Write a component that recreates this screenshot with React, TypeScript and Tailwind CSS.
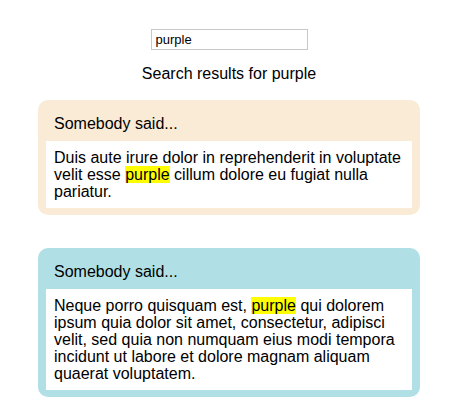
import React from "react";

function Highlight({ text, term }: { text: string; term: string }) {
  const parts = text.split(term);
  return (
    <>
      {parts.map((p, i) => (
        <React.Fragment key={i}>
          {p}
          {i < parts.length - 1 && <mark className="bg-[#ffff00] text-black">{term}</mark>}
        </React.Fragment>
      ))}
    </>
  );
}

function Card({ bg, text }: { bg: string; text: string }) {
  return (
    <div className={`${bg} rounded-[10px] px-2 pt-[15px] pb-[7px]`}>
      <div className="leading-[17px] px-2 mb-[9px]">Somebody said...</div>
      <div className="bg-white px-2 py-2 leading-[17px]">
        <Highlight text={text} term="purple" />
      </div>
    </div>
  );
}

export default function App() {
  return (
    <div
      className="w-[458px] h-[409px] bg-white text-black text-[16px] flex flex-col items-stretch"
      style={{ fontFamily: '"Liberation Sans", Arial, sans-serif' }}
    >
      <div className="flex justify-center pt-[29px]">
        <input
          className="w-[157px] h-[21px] border border-[#c8c8c8] px-[4px] text-[13px] text-black outline-none"
          defaultValue="purple"
          style={{ fontFamily: '"Liberation Sans", Arial, sans-serif' }}
        />
      </div>
      <div className="text-center leading-[18px] mt-[15px]">Search results for purple</div>
      <div className="mx-[38px] mt-[17px] flex flex-col gap-[33px]">
        <Card
          bg="bg-[#faebd7]"
          text="Duis aute irure dolor in reprehenderit in voluptate velit esse purple cillum dolore eu fugiat nulla pariatur."
        />
        <Card
          bg="bg-[#b0e0e6]"
          text="Neque porro quisquam est, purple qui dolorem ipsum quia dolor sit amet, consectetur, adipisci velit, sed quia non numquam eius modi tempora incidunt ut labore et dolore magnam aliquam quaerat voluptatem."
        />
      </div>
    </div>
  );
}
